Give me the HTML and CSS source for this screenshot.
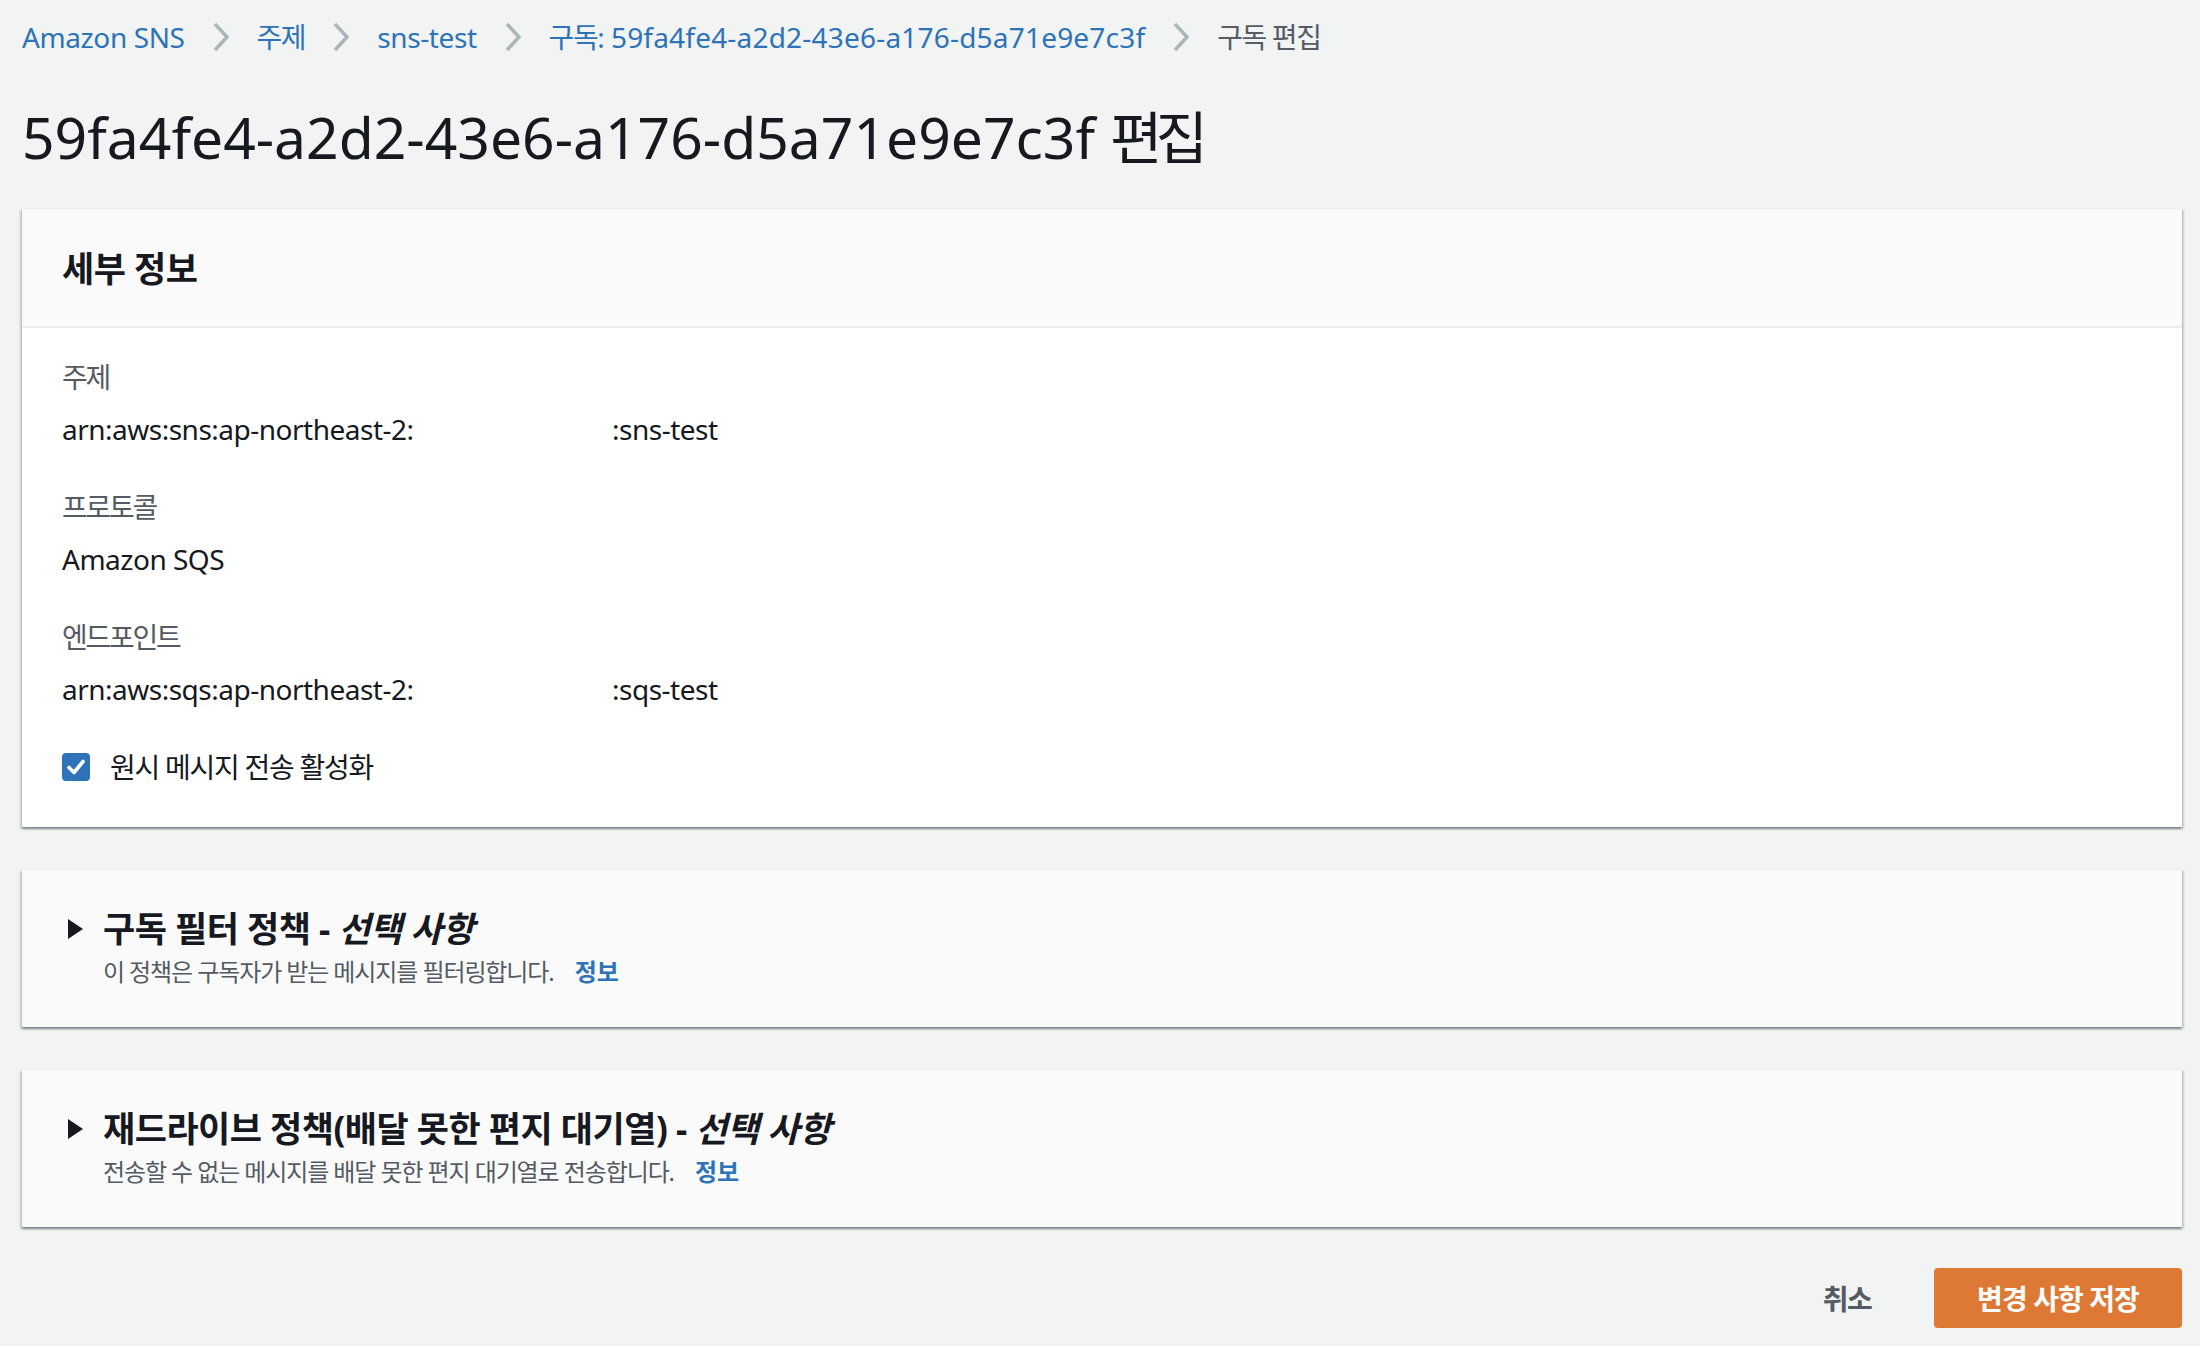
FILE: index.html
```html
<!DOCTYPE html>
<html lang="ko">
<head>
<meta charset="utf-8">
<title>구독 편집</title>
<link rel="stylesheet" href="styles.css">
</head>
<body>
<nav class="breadcrumbs">
  <a class="crumb" href="#">Amazon SNS</a>
  <svg class="sep" width="18" height="30" viewBox="0 0 18 30"><path d="M3 2 L15 15 L3 28" fill="none" stroke="#aab7b8" stroke-width="3.5"/></svg>
  <a class="crumb ko" href="#">주제</a>
  <svg class="sep" width="18" height="30" viewBox="0 0 18 30"><path d="M3 2 L15 15 L3 28" fill="none" stroke="#aab7b8" stroke-width="3.5"/></svg>
  <a class="crumb" href="#">sns-test</a>
  <svg class="sep" width="18" height="30" viewBox="0 0 18 30"><path d="M3 2 L15 15 L3 28" fill="none" stroke="#aab7b8" stroke-width="3.5"/></svg>
  <a class="crumb crumb-id" href="#"><span class="ko">구독:</span> 59fa4fe4-a2d2-43e6-a176-d5a71e9e7c3f</a>
  <svg class="sep" width="18" height="30" viewBox="0 0 18 30"><path d="M3 2 L15 15 L3 28" fill="none" stroke="#aab7b8" stroke-width="3.5"/></svg>
  <span class="crumb current ko">구독 편집</span>
</nav>

<h1 class="page-title">59fa4fe4-a2d2-43e6-a176-d5a71e9e7c3f <span class="ko-title">편집</span></h1>

<section class="container">
  <header class="container-header">
    <h2 class="header-title">세부 정보</h2>
  </header>
  <div class="container-body">
    <div class="field">
      <div class="label">주제</div>
      <div class="value"><span class="arn-prefix">arn:aws:sns:ap-northeast-2:</span>:sns-test</div>
    </div>
    <div class="field">
      <div class="label">프로토콜</div>
      <div class="value">Amazon SQS</div>
    </div>
    <div class="field">
      <div class="label">엔드포인트</div>
      <div class="value"><span class="arn-prefix">arn:aws:sqs:ap-northeast-2:</span>:sqs-test</div>
    </div>
    <label class="checkbox-row">
      <svg class="checkbox" width="28" height="28" viewBox="0 0 28 28"><rect x="0" y="0" width="28" height="28" rx="4" fill="#2e73b8"/><path d="M7 14.5 L12 19.5 L21 8.5" fill="none" stroke="#fff" stroke-width="3.6" stroke-linecap="round" stroke-linejoin="round"/></svg>
      <span class="checkbox-label">원시 메시지 전송 활성화</span>
    </label>
  </div>
</section>

<section class="container expandable">
  <div class="exp-heading">
    <svg class="caret" width="15" height="20" viewBox="0 0 15 20"><polygon points="0,0 15,10 0,20" fill="#16191f"/></svg>
    <h2 class="exp-title">구독 필터 정책 - <em>선택 사항</em></h2>
  </div>
  <p class="exp-desc"><span class="desc-text">이 정책은 구독자가 받는 메시지를 필터링합니다.</span><a class="info" href="#">정보</a></p>
</section>

<section class="container expandable">
  <div class="exp-heading">
    <svg class="caret" width="15" height="20" viewBox="0 0 15 20"><polygon points="0,0 15,10 0,20" fill="#16191f"/></svg>
    <h2 class="exp-title">재드라이브 정책(배달 못한 편지 대기열) - <em>선택 사항</em></h2>
  </div>
  <p class="exp-desc"><span class="desc-text">전송할 수 없는 메시지를 배달 못한 편지 대기열로 전송합니다.</span><a class="info" href="#">정보</a></p>
</section>

<footer class="actions">
  <button class="btn-link" type="button">취소</button>
  <button class="btn-primary" type="button">변경 사항 저장</button>
</footer>
</body>
</html>
```

FILE: styles.css
```css
* {
  box-sizing: border-box;
}

body {
  margin: 0;
  padding: 17px 18px 0 22px;
  background: #f2f3f3;
  color: #16191f;
  font-family: "Noto Sans", "Noto Sans CJK KR", sans-serif;
}

.breadcrumbs {
  display: flex;
  align-items: center;
  height: 40px;
  font-size: 28px;
  line-height: 40px;
  white-space: nowrap;
  letter-spacing: -0.4px;
}

.crumb {
  color: #2e73b8;
  text-decoration: none;
}

.crumb-id {
  letter-spacing: 0.2px;
}

.crumb.current {
  color: #545b64;
}

.ko {
  letter-spacing: -0.05em;
}

.sep {
  display: block;
  margin: 0 27px;
  flex: none;
}

.page-title {
  margin: 42px 0 0;
  font-size: 57px;
  font-weight: 400;
  line-height: 76px;
  color: #16191f;
  white-space: nowrap;
}

.ko-title {
  letter-spacing: -0.12em;
}

.container {
  background: #ffffff;
  border-top: 1px solid #eaeded;
  box-shadow: 0 2px 2px 0 rgba(0, 28, 36, 0.3), 2px 2px 2px 0 rgba(0, 28, 36, 0.15), -2px 2px 2px 0 rgba(0, 28, 36, 0.15);
  margin-top: 33px;
}

.container-header {
  background: #fafafa;
  padding: 38px 40px 35px;
  border-bottom: 2px solid #eaeded;
}

.header-title {
  margin: 0;
  font-size: 35px;
  font-weight: 700;
  line-height: 44px;
  letter-spacing: -0.5px;
}

.container-body {
  padding: 29px 40px 40px;
}

.field + .field {
  margin-top: 38px;
}

.label {
  font-size: 28px;
  line-height: 40px;
  color: #545b64;
  letter-spacing: -0.08em;
}

.value {
  margin-top: 12px;
  font-size: 28px;
  line-height: 40px;
  color: #16191f;
  white-space: nowrap;
  letter-spacing: -0.5px;
}

.arn-prefix {
  display: inline-block;
  width: 550px;
}

.checkbox-row {
  display: flex;
  align-items: center;
  margin-top: 38px;
  height: 40px;
}

.checkbox {
  display: block;
  flex: none;
}

.checkbox-label {
  margin-left: 20px;
  font-size: 28px;
  line-height: 40px;
  letter-spacing: -0.045em;
}

.expandable {
  background: #fafafa;
  margin-top: 42px;
  padding: 37px 40px 38px;
}

.exp-heading {
  display: flex;
  align-items: center;
  height: 44px;
}

.caret {
  display: block;
  flex: none;
  margin-left: 6px;
  margin-right: 20px;
}

.exp-title {
  margin: 0;
  font-size: 35px;
  font-weight: 700;
  line-height: 44px;
  letter-spacing: -0.5px;
  white-space: nowrap;
}

.exp-title em {
  font-style: italic;
}

.exp-desc {
  margin: 4px 0 0 41px;
  font-size: 24px;
  line-height: 34px;
  color: #545b64;
  white-space: nowrap;
}

.desc-text {
  letter-spacing: -1.1px;
}

.info {
  margin-left: 21px;
  color: #2e73b8;
  font-weight: 700;
  text-decoration: none;
}

.actions {
  display: flex;
  justify-content: flex-end;
  align-items: center;
  gap: 23px;
  margin-top: 41px;
}

.btn-link {
  height: 60px;
  padding: 0 40px;
  border: none;
  background: transparent;
  color: #545b64;
  font-family: inherit;
  font-size: 28px;
  font-weight: 700;
  letter-spacing: -0.06em;
}

.btn-primary {
  width: 248px;
  height: 60px;
  border: none;
  border-radius: 4px;
  background: #dd7935;
  color: #ffffff;
  font-family: inherit;
  font-size: 28px;
  font-weight: 700;
  letter-spacing: -0.9px;
}
```
